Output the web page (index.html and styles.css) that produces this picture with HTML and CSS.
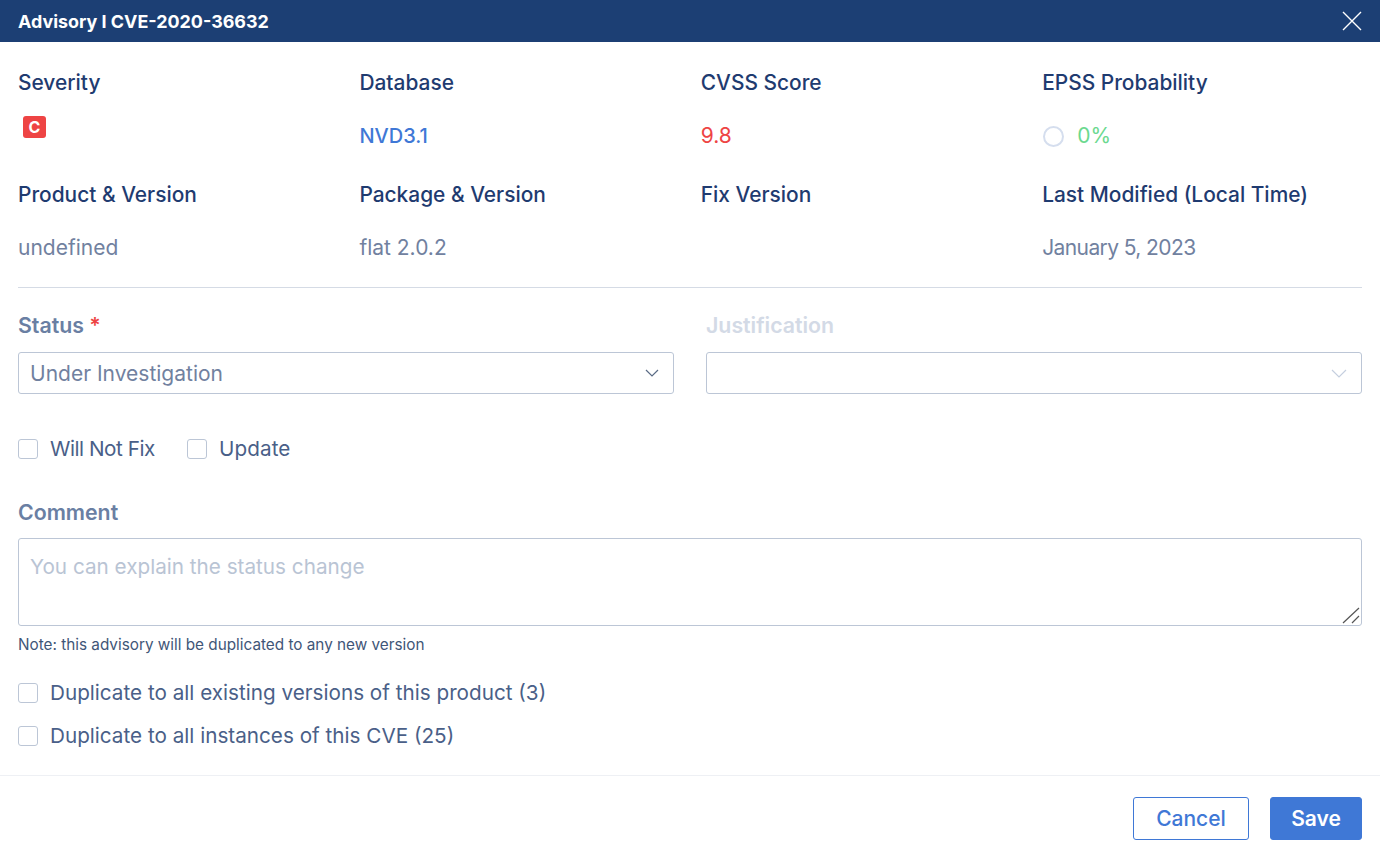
FILE: index.html
```html
<!DOCTYPE html>
<html lang="en">
<head>
<meta charset="utf-8">
<title>Advisory</title>
<link rel="stylesheet" href="styles.css">
</head>
<body>
<div class="modal">
  <header class="header">
    <span class="title">Advisory I CVE-2020-36632</span>
    <svg class="close" width="20" height="20" viewBox="0 0 20 20"><path d="M1 1 19 19M19 1 1 19" stroke="#fff" stroke-width="1.4" fill="none"/></svg>
  </header>
  <main class="body">
    <section class="info">
      <div class="cell"><div class="label">Severity</div><div class="value"><span class="badge">C</span></div></div>
      <div class="cell"><div class="label">Database</div><div class="value blue">NVD3.1</div></div>
      <div class="cell"><div class="label">CVSS Score</div><div class="value red">9.8</div></div>
      <div class="cell"><div class="label">EPSS Probability</div><div class="value green"><span class="ring"></span>0%</div></div>
      <div class="cell"><div class="label">Product &amp; Version</div><div class="value">undefined</div></div>
      <div class="cell"><div class="label">Package &amp; Version</div><div class="value">flat 2.0.2</div></div>
      <div class="cell"><div class="label">Fix Version</div><div class="value"></div></div>
      <div class="cell"><div class="label">Last Modified (Local Time)</div><div class="value date">January 5, 2023</div></div>
    </section>
    <hr class="rule">
    <section class="selects">
      <div class="field">
        <div class="field-label">Status <span class="req">*</span></div>
        <div class="select"><span>Under Investigation</span><svg width="14" height="8" viewBox="0 0 14 8"><path d="M1 1 7 7 13 1" stroke="#5a6b85" stroke-width="1.2" fill="none"/></svg></div>
      </div>
      <div class="field">
        <div class="field-label disabled">Justification</div>
        <div class="select"><span></span><svg width="16" height="9" viewBox="0 0 16 9"><path d="M1 1 8 8 15 1" stroke="#c5cfdf" stroke-width="1.2" fill="none"/></svg></div>
      </div>
    </section>
    <div class="checks">
      <label class="check tight"><span class="box"></span>Will Not Fix</label>
      <label class="check wide"><span class="box"></span>Update</label>
    </div>
    <div class="field-label">Comment</div>
    <div class="comment-wrap">
      <textarea class="comment" placeholder="You can explain the status change"></textarea>
      <svg class="grip" width="18" height="17" viewBox="0 0 18 17"><path d="M1 16 17 1M10 16 17 9" stroke="#555" stroke-width="1.2" fill="none"/></svg>
    </div>
    <div class="note">Note: this advisory will be duplicated to any new version</div>
    <div class="dups">
      <label class="check"><span class="box"></span>Duplicate to all existing versions of this product (3)</label>
      <label class="check"><span class="box"></span>Duplicate to all instances of this CVE (25)</label>
    </div>
  </main>
  <footer class="footer">
    <button class="btn ghost">Cancel</button>
    <button class="btn primary">Save</button>
  </footer>
</div>
</body>
</html>
```
FILE: styles.css
```css
* { box-sizing: border-box; }
html, body { margin: 0; height: 100%; background: #fff; }
body { font-family: Inter, "Liberation Sans", sans-serif; color: #1d3a6e; overflow: hidden; }
.modal { width: 1380px; height: 861px; display: flex; flex-direction: column; }
.header { height: 42px; flex: none; background: #1c3f74; color: #fff; display: flex; align-items: center; justify-content: space-between; padding: 0 18px; }
.title { font-size: 17.9px; font-weight: 700; }
.body { padding: 0 18px; flex: 1; }
.info { display: grid; grid-template-columns: repeat(4, 341.4px); padding-top: 28px; }
.cell { height: 112px; }
.label { font-size: 20.9px; font-weight: 500; line-height: 26px; color: #1f3b70; }
.value { margin-top: 27px; height: 26px; font-size: 21px; line-height: 26px; color: #71819f; display: flex; align-items: center; }
.date { letter-spacing: -0.6px; }
.blue { color: #3f78d6; font-size: 20px; font-weight: 500; }
.red { color: #ee4444; }
.green { color: #6bd98f; }
.badge { width: 23px; height: 22px; margin: -18px 0 0 5px; border-radius: 3px; background: #ee4444; color: #fff; font-size: 16px; font-weight: 700; display: flex; align-items: center; justify-content: center; }
.ring { width: 21px; height: 21px; margin: 0 13px 0 1px; border: 2px solid #d5deee; border-radius: 50%; }
.rule { margin: -7px 0 0; border: 0; border-top: 1px solid #d5dbe5; }
.selects { display: grid; grid-template-columns: 656px 656px; column-gap: 32px; margin-top: 24px; }
.field-label { font-size: 21.3px; font-weight: 600; line-height: 26px; color: #6a7fa3; }
.field-label.disabled { color: #d3dae6; }
.req { color: #ee4444; }
.select { margin-top: 14px; height: 42px; border: 1px solid #bcc6d6; border-radius: 3px; display: flex; align-items: center; justify-content: space-between; padding: 0 14px 0 11px; font-size: 21px; color: #71819f; }
.checks { display: flex; gap: 32px; margin-top: 42px; margin-bottom: 37px; }
.check { display: flex; align-items: center; gap: 12px; font-size: 20.7px; line-height: 26px; color: #4a5f88; }
.tight { letter-spacing: -0.45px; }
.wide { letter-spacing: 0.1px; }
.box { width: 20px; height: 20px; border: 1px solid #bcc6d6; border-radius: 3px; background: #fff; }
.comment-wrap { position: relative; margin-top: 13px; }
.comment { display: block; width: 100%; height: 88px; padding: 15px 11px 11px; border: 1px solid #bcc6d6; border-radius: 3px; font: 20.7px/26px Inter, "Liberation Sans", sans-serif; color: #71819f; outline: 0; resize: none; }
.comment::placeholder { color: #b9c4d4; opacity: 1; }
.grip { position: absolute; right: 2px; bottom: 2px; }
.note { margin-top: 9px; font-size: 15.3px; line-height: 20px; color: #3f5678; }
.dups { display: flex; flex-direction: column; gap: 17px; margin-top: 25px; }
.footer { flex: none; height: 86px; border-top: 1px solid #eef0f4; display: flex; justify-content: flex-end; align-items: flex-start; gap: 21px; padding: 21px 18px 0; }
.btn { height: 43px; border-radius: 3px; font: 600 21px Inter, "Liberation Sans", sans-serif; }
.ghost { width: 116px; background: #fff; border: 1px solid #3f78d6; color: #3f78d6; font-weight: 500; }
.primary { width: 92px; background: #3f78d6; border: 1px solid #3f78d6; color: #fff; }
```
